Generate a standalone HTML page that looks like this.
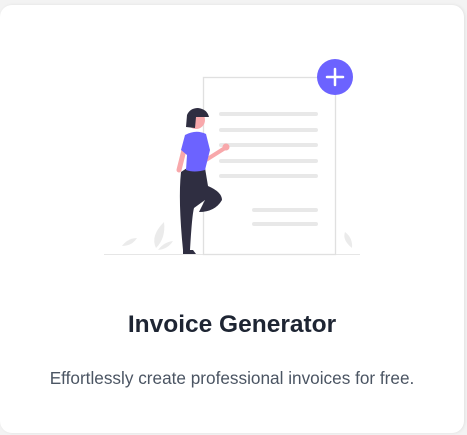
<!DOCTYPE html>
<html><head><style>
html,body{margin:0;padding:0;width:467px;height:435px;background:#f3f3f3;overflow:hidden;font-family:"Liberation Sans",sans-serif}
.card{position:absolute;left:0;top:5px;width:464px;height:428px;background:#fff;border-radius:12px;box-shadow:1px 0 3px rgba(0,0,0,.08)}
h1{position:absolute;left:0;width:464px;top:311px;margin:0;text-align:center;font-size:24.5px;font-weight:bold;color:#1e2533;line-height:28px}
p{position:absolute;left:0;width:464px;top:368px;margin:0;text-align:center;font-size:17.2px;color:#4b5563;line-height:20px}
svg{position:absolute;left:0;top:0}
</style></head><body>
<div class="card"></div>
<svg width="467" height="435">
<line x1="104" y1="254.5" x2="360" y2="254.5" stroke="#e6e6e6" stroke-width="1"/>
<rect x="203.5" y="77.5" width="132" height="177" fill="#fff" stroke="#e0e0e0" stroke-width="1.3"/>
<g stroke="#e8e8e8" stroke-width="4" stroke-linecap="round">
<line x1="221" y1="114" x2="316" y2="114"/><line x1="221" y1="130" x2="316" y2="130"/>
<line x1="221" y1="145" x2="316" y2="145"/><line x1="221" y1="161" x2="316" y2="161"/>
<line x1="221" y1="176" x2="316" y2="176"/><line x1="254" y1="210" x2="316" y2="210"/>
<line x1="254" y1="224" x2="316" y2="224"/></g>
<circle cx="335" cy="77" r="18" fill="#6c63ff"/>
<g stroke="#fff" stroke-width="2.5" stroke-linecap="round"><line x1="335" y1="69" x2="335" y2="85"/><line x1="327" y1="77" x2="343" y2="77"/></g>
<path d="M122 246 Q128 238 137 238 Q132 246 122 246Z" fill="#ebebeb"/>
<path d="M156 248 Q150 236 164 222 Q166 238 156 248Z" fill="#ebebeb"/>
<path d="M158 250 Q164 242 173 241 Q168 249 158 250Z" fill="#ebebeb"/>
<path d="M352 248 Q342 240 345 232 Q353 238 352 248Z" fill="#ebebeb"/>
<path d="M192 150 L206 160 L225 148" stroke="#f8a8ab" stroke-width="4" fill="none" stroke-linecap="round"/>
<circle cx="226" cy="147" r="3.5" fill="#f8a8ab"/>
<path d="M184 150 L179 170" stroke="#f8a8ab" stroke-width="5" stroke-linecap="round"/>
<path d="M181 172 Q178 200 183 250 L190 250 Q192 215 194 208 L205 200 L199 212 Q215 212 222 200 Q222 192 208 186 L205 168 L187 168Z" fill="#2f2e41"/>
<rect x="185" y="250" width="8" height="3" fill="#f8a8ab"/>
<path d="M183 254 L183 250 L193 250 L196 254Z" fill="#2f2e41"/>
<path d="M185 135 Q196 129 206 134 L210 150 L205 170 Q194 173 186 170 L187 155 L181 150Z" fill="#6c63ff"/>
<circle cx="196" cy="120" r="9" fill="#f8a8ab"/>
<path d="M186 127 L187 115 Q190 108 198 108 Q207 109 209 117 L196 117 L195 128Z" fill="#2f2e41"/>
</svg>
<h1>Invoice Generator</h1>
<p>Effortlessly create professional invoices for free.</p>
</body></html>
